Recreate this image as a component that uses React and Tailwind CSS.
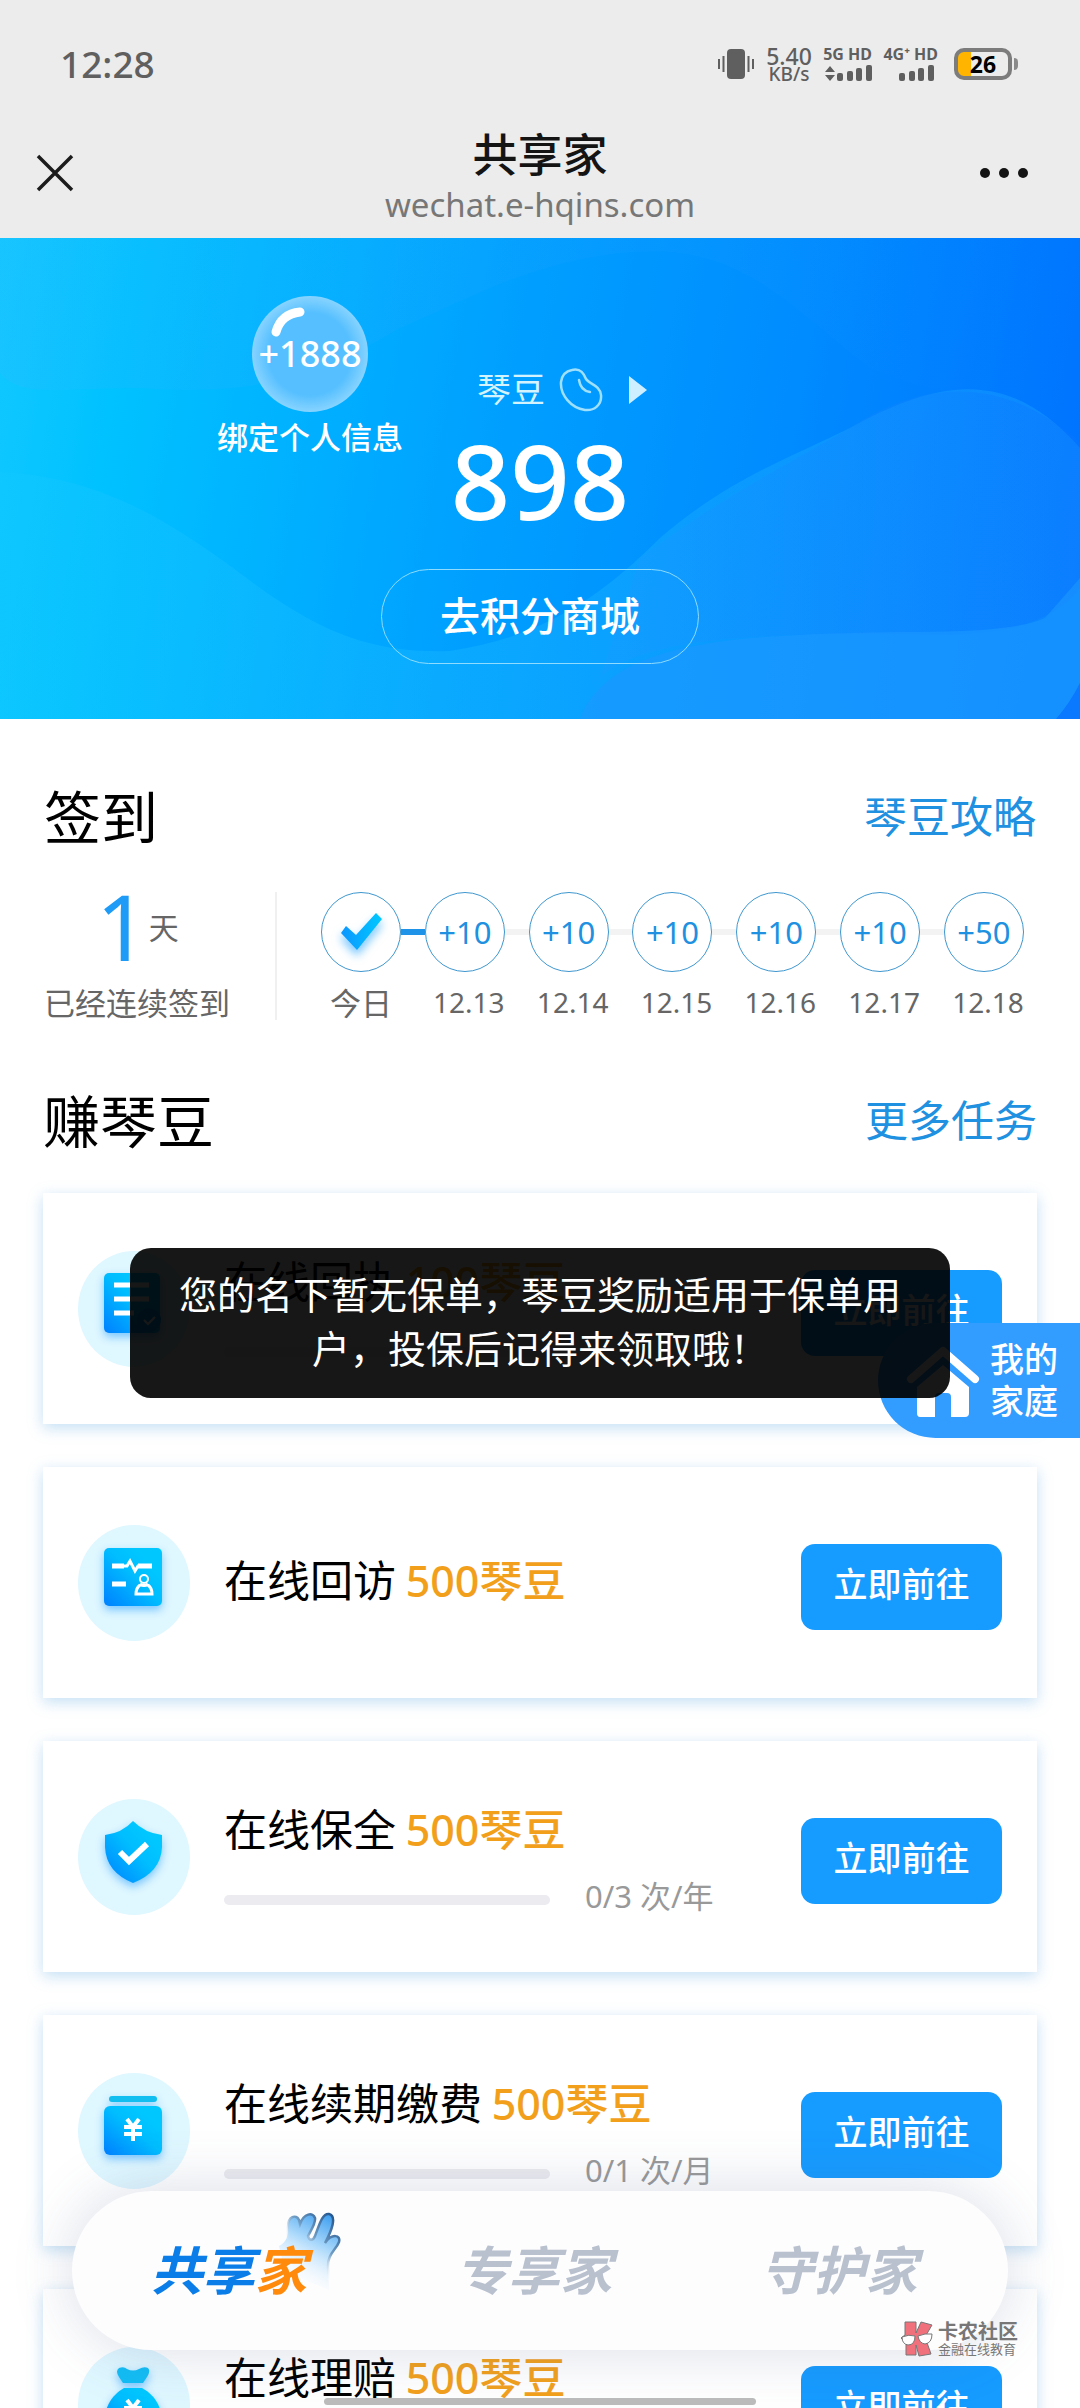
import React from "react";

const days = [
  { label: "今日", done: true },
  { label: "12.13", points: "+10" },
  { label: "12.14", points: "+10" },
  { label: "12.15", points: "+10" },
  { label: "12.16", points: "+10" },
  { label: "12.17", points: "+10" },
  { label: "12.18", points: "+50" },
];

const tasks = [
  { title: "在线回执", reward: "100琴豆", icon: "receipt", count: " " },
  { title: "在线回访", reward: "500琴豆", icon: "visit" },
  { title: "在线保全", reward: "500琴豆", icon: "shield", count: "0/3 次/年" },
  { title: "在线续期缴费", reward: "500琴豆", icon: "renew", count: "0/1 次/月" },
  { title: "在线理赔", reward: "500琴豆", icon: "claim", count: " " },
];

function Yen({ x, y }) {
  return (
    <g transform={`translate(${x} ${y})`} stroke="#fff" strokeWidth="4" fill="none">
      <path d="M-6-11 0-3 6-11M0-4V11M-9-3H9M-9 4H9" />
    </g>
  );
}

function TaskIcon({ kind }) {
  return (
    <svg viewBox="0 0 112 116" className="h-[116px] w-[112px] shrink-0" aria-hidden="true">
      <defs>
        <linearGradient id={"fill-" + kind} x1="0" y1="1" x2="0.8" y2="0.2">
          <stop offset="0" stopColor="#0080ff" />
          <stop offset="0.65" stopColor="#00bdff" />
          <stop offset="1" stopColor="#00c8ff" />
        </linearGradient>
      </defs>
      <ellipse cx="56" cy="58" rx="56" ry="58" fill="#dff7ff" />
      <g className="drop-shadow-[0_4px_4px_rgba(0,140,255,0.45)]">
        {kind === "receipt" && (
          <>
            <rect x="26" y="22" width="56" height="60" rx="5" fill="url(#fill-receipt)" />
            <path d="M36 34H71M36 48H71M36 62H56" stroke="#fff" strokeWidth="5" />
            <circle cx="71" cy="69" r="12" fill="#00a2ff" />
            <path d="M66 69l4 4 7-7" stroke="#fff" strokeWidth="2" fill="none" />
          </>
        )}
        {kind === "visit" && (
          <>
            <rect x="26" y="23" width="58" height="58" rx="5" fill="url(#fill-visit)" />
            <path d="M34 41H46" stroke="#fff" strokeWidth="5" />
            <path d="M44 41H49L52 36 57 46 60 41H64" stroke="#fff" strokeWidth="3" fill="none" />
            <path d="M60 41H74M34 59H48" stroke="#fff" strokeWidth="5" />
            <circle cx="66" cy="54" r="4" stroke="#fff" strokeWidth="2" fill="none" />
            <path d="M62 59q4 3 8 0M62 60q-4 3-4 9H74q0-6-4-9M59 69H73" stroke="#fff" strokeWidth="3" fill="none" />
          </>
        )}
        {kind === "shield" && (
          <>
            <path d="M55 22Q67 34 84 36V48Q83 73 55 84 28 73 27 48V36Q44 34 55 22Z" fill="url(#fill-shield)" />
            <path d="M42 53l9 9 18-17" stroke="#fff" strokeWidth="6" fill="none" />
          </>
        )}
        {kind === "renew" && (
          <>
            <rect x="31" y="23" width="48" height="6" rx="3" fill="#12bdf0" />
            <rect x="26" y="33" width="58" height="49" rx="6" fill="url(#fill-renew)" />
            <Yen x={55} y={57} />
          </>
        )}
        {kind === "claim" && (
          <>
            <path d="M41 21q5-2 8 1 6 3 12 0 5-3 9-1 3 3-1 9l-4 6H45l-4-6q-4-6 0-9Z" fill="#12bdf5" />
            <path d="M46 41H64Q84 52 84 76 83 88 70 88H40Q27 88 26 76 27 52 46 41Z" fill="url(#fill-claim)" />
            <Yen x={55} y={64} />
          </>
        )}
      </g>
    </svg>
  );
}

function StatusBar() {
  return (
    <div className="flex h-32 items-center justify-between pr-[62px] pl-15 text-[#5f5f5f]">
      <time className="font-['Noto_Sans','Noto_Sans_CJK_SC',sans-serif] text-[37px] leading-10 font-medium">12:28</time>
      <div className="flex items-center font-['Noto_Sans','Noto_Sans_CJK_SC',sans-serif]">
        <svg viewBox="0 0 36 32" className="h-8 w-9" aria-hidden="true">
          <rect x="9" y="1" width="18" height="30" rx="4" fill="#5f5f5f" />
          <path d="M1 11v10M5.500 8v16M30.500 8v16M35 11v10" stroke="#5f5f5f" strokeWidth="2" />
        </svg>
        <div className="ml-2.5 w-[50px] text-center font-medium">
          <div className="text-[23px] leading-5">5.40</div>
          <div className="text-[19px] leading-4">KB/s</div>
        </div>
        <div className="ml-2.5 flex w-12 flex-col items-end gap-1">
          <span className="text-[16px] leading-3 font-bold whitespace-nowrap">5G HD</span>
          <svg viewBox="0 0 48 17" className="h-[17px] w-12" aria-hidden="true" fill="#5f5f5f">
            <path d="M6 2l5 6H1zM6 17l5-6H1z" />
            <rect x="13" y="9" width="6" height="8" rx="2" />
            <rect x="23" y="7" width="6" height="10" rx="2" />
            <rect x="32" y="4" width="6" height="13" rx="2" />
            <rect x="42" y="1" width="6" height="16" rx="2" />
          </svg>
        </div>
        <div className="ml-2.5 flex w-14 flex-col items-end gap-1">
          <span className="text-[16px] leading-3 font-bold whitespace-nowrap">4G⁺ HD</span>
          <svg viewBox="0 0 38 17" className="mr-1 h-[17px] w-[38px]" aria-hidden="true" fill="#5f5f5f">
            <rect x="3" y="9" width="6" height="8" rx="2" />
            <rect x="13" y="7" width="6" height="10" rx="2" />
            <rect x="22" y="4" width="6" height="13" rx="2" />
            <rect x="32" y="1" width="6" height="16" rx="2" />
          </svg>
        </div>
        <div className="ml-4 flex items-center">
          <div className="flex h-8 w-[58px] items-center justify-center rounded-[10px] border-4 border-[#7c7c7c] bg-[linear-gradient(90deg,#ffb400_13px,#ececec_13px)] text-[23px] leading-6 font-bold text-black">
            26
          </div>
          <div className="ml-0.5 h-3 w-1 rounded-r-full bg-[#8a8a8a]" />
        </div>
      </div>
    </div>
  );
}

function TitleBar() {
  return (
    <div className="flex h-[110px] justify-between px-9">
      <button aria-label="关闭" className="flex h-[90px] w-24 items-center">
        <svg viewBox="0 0 38 38" className="size-[38px]" aria-hidden="true">
          <path d="M2 2 36 36M36 2 2 36" stroke="#1c1c1c" strokeWidth="3.500" />
        </svg>
      </button>
      <div className="text-center">
        <h1 className="text-[45px] leading-[50px] font-medium text-[#141414]">共享家</h1>
        <p className="font-['Noto_Sans','Noto_Sans_CJK_SC',sans-serif] text-[33px] leading-[54px] text-[#777]">
          wechat.e-hqins.com
        </p>
      </div>
      <button aria-label="更多" className="flex h-[90px] w-24 items-center justify-end gap-[9px] pr-4">
        <span className="size-2.5 rounded-full bg-[#141414]" />
        <span className="size-2.5 rounded-full bg-[#141414]" />
        <span className="size-2.5 rounded-full bg-[#141414]" />
      </button>
    </div>
  );
}

function Banner() {
  return (
    <section className="relative flex flex-col items-center bg-[linear-gradient(100deg,#12c8ff_0%,#00c2ff_12%,#00a0ff_45%,#008cff_70%,#0070ff_100%)] pt-[130px] pb-[55px] text-white">
      <svg viewBox="0 0 1080 481" preserveAspectRatio="none" className="absolute inset-0 size-full" aria-hidden="true">
        <defs>
          <linearGradient id="wave-top" x1="0" y1="0" x2="1" y2="0">
            <stop offset="0" stopColor="#30b8ff" />
            <stop offset="0.7" stopColor="#1a98ff" stopOpacity="0.7" />
            <stop offset="1" stopColor="#0070ff" stopOpacity="0" />
          </linearGradient>
          <linearGradient id="wave-right" x1="0" y1="0" x2="1" y2="0">
            <stop offset="0" stopColor="#199cff" />
            <stop offset="1" stopColor="#0a74ff" />
          </linearGradient>
          <linearGradient id="wave-left" x1="0" y1="0" x2="1" y2="0">
            <stop offset="0" stopColor="#12c8ff" />
            <stop offset="1" stopColor="#1698ff" />
          </linearGradient>
        </defs>
        <path d="M0 0H1080V160Q960 170 870 130C790 70 740 0 620 15 530 25 470 60 400 90 330 130 270 160 140 150 60 150 20 160 0 135Z" fill="url(#wave-top)" opacity=".22" />
        <path d="M0 234C110 240 180 290 260 350 330 400 380 415 450 413 540 400 600 360 660 300 730 240 790 220 850 190 940 140 1010 130 1080 210V481H0Z" fill="url(#wave-left)" opacity=".5" />
        <path d="M640 320C720 260 790 225 850 190 940 130 1020 150 1080 205V350C1050 390 990 400 900 396 760 395 640 400 600 440Z" fill="url(#wave-right)" opacity=".4" />
        <path d="M580 481C600 430 660 405 780 398 900 390 1000 400 1045 380L1080 340V481Z" fill="#1c98ff" opacity=".6" />
        <path d="M1056 481Q1070 465 1080 445V481Z" fill="#0a78ff" />
      </svg>

      <button className="absolute top-[58px] left-[217px] flex flex-col items-center">
        <span className="relative flex size-[116px] items-center justify-center rounded-full bg-[radial-gradient(circle_at_50%_50%,#55bfff_50%,#8ad5ff_72%)] font-['Noto_Sans','Noto_Sans_CJK_SC',sans-serif] text-[36px] leading-10 font-medium">
          <svg viewBox="0 0 116 116" className="absolute inset-0 size-full" aria-hidden="true">
            <path d="M24 36Q29 18 48 16" stroke="#fff" strokeWidth="9" strokeLinecap="round" fill="none" />
          </svg>
          <span className="relative">+1888</span>
        </span>
        <span className="mt-1 text-[31px] leading-10 font-medium">绑定个人信息</span>
      </button>

      <button className="relative flex h-11 items-center pl-11 text-[34px] leading-11 text-[#d3f3ff]">
        <span className="pb-1">琴豆</span>
        <svg viewBox="0 0 44 44" className="ml-3.5 size-11" fill="none" stroke="#9fe0ff" strokeWidth="2.500" strokeLinecap="round" aria-hidden="true">
          <path d="M13 2C22 0 25 6 27 11 30 16 41 17 42 27 43 37 35 43 26 42 12 40 1 27 2 14 3 7 7 3 13 2Z" />
          <path d="M20 12C21 19 24 23 31 24" />
        </svg>
        <svg viewBox="0 0 18 28" className="ml-[26px] h-7 w-[18px]" fill="#cdefff" aria-hidden="true">
          <path d="M0 0 18 14 0 28Z" />
        </svg>
      </button>
      <strong className="relative mt-4 font-['Noto_Sans','Noto_Sans_CJK_SC',sans-serif] text-[104px] leading-[104px] font-medium">898</strong>
      <button className="relative mt-[37px] h-[95px] w-[318px] rounded-full border border-[#8fdcff] pb-1.5 text-[40px] leading-[60px] font-medium">
        去积分商城
      </button>
    </section>
  );
}

function SectionHead({ title, link }) {
  return (
    <div className="flex items-center justify-between">
      <h2 className="text-[57px] leading-[68px] text-black">{title}</h2>
      <a href="#" className="text-[43px] leading-[68px] text-[#2090e0]">{link}</a>
    </div>
  );
}

function CheckIn() {
  return (
    <section className="px-11 pt-[61px]">
      <SectionHead title="签到" link="琴豆攻略" />
      <div className="mt-11 flex pr-3">
        <div className="flex h-32 w-[233px] shrink-0 flex-col border-r-2 border-[#f0f0f0] text-[#666]">
          <div className="flex h-[68px] items-center pl-[52px]">
            <span className="font-['Noto_Sans','Noto_Sans_CJK_SC',sans-serif] text-[92px] leading-[68px] text-[#1d9bf7]">1</span>
            <span className="text-[30px] leading-10">天</span>
          </div>
          <p className="mt-[22px] text-[31px] leading-10 whitespace-nowrap">已经连续签到</p>
        </div>
        <ol className="ml-11 flex flex-1">
          {days.map((day) => (
            <li key={day.label} className="flex flex-1 flex-col last:flex-none">
              <div className="flex items-center">
                <span className="flex size-20 shrink-0 items-center justify-center rounded-full border border-[#3f97cf] font-['Noto_Sans','Noto_Sans_CJK_SC',sans-serif] text-[31px] leading-10 text-[#2090e0]">
                  {day.done ? (
                    <svg viewBox="0 0 44 42" className="h-[42px] w-11 drop-shadow-[0_6px_5px_rgba(0,150,255,0.55)]" aria-label="已签到">
                      <defs>
                        <linearGradient id="tick" x1="0" y1="0" x2="1" y2="0">
                          <stop offset="0" stopColor="#0c96ff" />
                          <stop offset="1" stopColor="#00c8ff" />
                        </linearGradient>
                      </defs>
                      <path d="M2 22 7 15 17 24 37 2 43 8 18 39Z" fill="url(#tick)" />
                    </svg>
                  ) : (
                    day.points
                  )}
                </span>
                {day.label !== "12.18" && (
                  <span className={day.done ? "h-1.5 flex-1 bg-[#1f93e8]" : "h-1.5 flex-1 bg-[#f3f3f3]"} />
                )}
              </div>
              <span className={day.done ? "mt-2.5 w-20 text-center text-[31px] leading-10 text-[#666]" : "mt-2.5 w-20 pl-2 text-center font-['Noto_Sans','Noto_Sans_CJK_SC',sans-serif] text-[28px] leading-10 text-[#666]"}>
                {day.label}
              </span>
            </li>
          ))}
        </ol>
      </div>
    </section>
  );
}

function TaskCard({ task }) {
  return (
    <li className="flex h-[231px] shrink-0 items-center bg-white px-[35px] shadow-[0_4px_14px_rgba(90,165,225,0.36)]">
      <TaskIcon kind={task.icon} />
      <div className={task.count ? "ml-[34px] flex min-w-0 flex-1 flex-col pt-1" : "ml-[34px] flex min-w-0 flex-1 flex-col pb-1.5"}>
        <h3 className="text-[43px] leading-[60px] whitespace-nowrap text-black">
          {task.title}{" "}
          <span className="font-['Noto_Sans','Noto_Sans_CJK_SC',sans-serif] font-medium text-[#f2a01c]">{task.reward}</span>
        </h3>
        {task.count && (
          <div className="mt-3 flex h-12 items-center">
            <div role="progressbar" aria-label={task.title} aria-valuenow={0} className="mt-2 h-2.5 w-[326px] rounded-full bg-[#ebebf0]" />
            <span className="ml-[35px] font-['Noto_Sans','Noto_Sans_CJK_SC',sans-serif] text-[31px] leading-11 whitespace-pre text-[#999]">{task.count}</span>
          </div>
        )}
      </div>
      <button className="mt-2 h-[86px] w-[201px] shrink-0 rounded-[14px] bg-[#169bff] pb-2 text-[34px] leading-12 font-medium text-white">
        立即前往
      </button>
    </li>
  );
}

function FamilyButton() {
  return (
    <button className="absolute top-[1323px] right-0 flex h-[115px] w-[202px] items-center rounded-l-full bg-[#339cff] pl-7 text-white">
      <svg viewBox="0 0 74 76" className="h-[76px] w-[74px]" aria-hidden="true">
        <path d="M5 36 37 8 69 36" stroke="#fff" strokeWidth="8" strokeLinecap="round" strokeLinejoin="round" fill="none" />
        <path d="M11 44 37 22 63 44V70Q63 74 59 74H45V54Q45 50 41 50H33Q29 50 29 54V74H14Q11 74 11 70Z" fill="#fff" />
      </svg>
      <span className="ml-2.5 w-[68px] pb-1 text-[34px] leading-[42px] font-medium">我的家庭</span>
    </button>
  );
}

function Toast() {
  return (
    <div role="status" className="absolute inset-x-[130px] top-[1248px] rounded-[21px] bg-black/91 px-12 pt-[18px] pb-6 text-center text-[38px] leading-[54px] text-white">
      您的名下暂无保单，琴豆奖励适用于保单用户，投保后记得来领取哦！
    </div>
  );
}

function BottomNav() {
  return (
    <nav className="absolute inset-x-[72px] bottom-[58px] flex h-[159px] items-center rounded-full bg-[#fdfdfe] pr-4 pb-1.5 pl-1 text-[52px] leading-[72px] font-bold text-[#b9c1cf] italic shadow-[0_0_60px_rgba(80,100,140,0.22)]">
      <a href="#" aria-current="page" className="relative flex-1 text-center text-[#0b7de8]">
        <svg viewBox="0 0 64 80" className="absolute -top-5 right-[38px] h-20 w-16" aria-hidden="true">
          <defs>
            <linearGradient id="hand" x1="0.8" y1="0" x2="0.4" y2="1">
              <stop offset="0" stopColor="#3f9ff0" />
              <stop offset="0.4" stopColor="#a9d8fb" />
              <stop offset="1" stopColor="#fff" stopOpacity="0" />
            </linearGradient>
            <linearGradient id="hand-line" x1="1" y1="0" x2="0.5" y2="0.65">
              <stop offset="0" stopColor="#174a86" />
              <stop offset="0.6" stopColor="#6f9cc4" />
              <stop offset="1" stopColor="#fff" stopOpacity="0" />
            </linearGradient>
          </defs>
          <path
            d="M0 34C8 30 9 24 9 15 9 4 17 2 20 8L21 12C25 1 34 0 36 6 37 11 32 18 29 24 30 29 34 29 36 24 40 14 43 1 50 2 58 4 53 18 46 31 53 21 62 23 60 30 57 38 48 42 49 56L50 78 6 60Z"
            fill="url(#hand)"
            stroke="url(#hand-line)"
            strokeWidth="2.500"
          />
        </svg>
        <span className="relative">
          共享<span className="text-[#ff8a0c]">家</span>
        </span>
      </a>
      <a href="#" className="flex-1 text-center">专享家</a>
      <a href="#" className="flex-1 text-center">守护家</a>
    </nav>
  );
}

function Watermark() {
  return (
    <div className="absolute right-[62px] bottom-[51px] flex items-center gap-1 text-[#777]">
      <svg viewBox="0 0 34 36" className="h-9 w-[34px]" aria-hidden="true">
        <path d="M5 1H16V12L21 1 32 4 25 16 31 33 19 35 16 24V34H6V22L1 17 5 14Z" fill="#f0707c" stroke="#777" strokeWidth="1" />
        <path d="M2 16Q9 13 15 15 15 24 8 24 2 23 2 16ZM18 15Q25 12 32 13 32 22 25 23 19 22 18 15Z" fill="#fff" stroke="#777" strokeWidth="1" />
      </svg>
      <div className="flex flex-col">
        <span className="text-[20px] leading-5 font-bold">卡农社区</span>
        <span className="text-[13px] leading-4">金融在线教育</span>
      </div>
    </div>
  );
}

export default function App() {
  return (
    <div className="relative flex h-screen flex-col overflow-hidden bg-white font-['Noto_Sans_CJK_SC',sans-serif]">
      <header className="shrink-0 bg-[#ececec]">
        <StatusBar />
        <TitleBar />
      </header>
      <main>
        <Banner />
        <CheckIn />
        <section className="px-[43px] pt-[62px]">
          <SectionHead title="赚琴豆" link="更多任务" />
          <ul className="mt-[41px] flex flex-col gap-[43px]">
            {tasks.map((task) => (
              <TaskCard key={task.title} task={task} />
            ))}
          </ul>
        </section>
      </main>
      <FamilyButton />
      <Toast />
      <BottomNav />
      <Watermark />
      <div className="absolute bottom-[3px] left-1/2 h-[7px] w-[432px] -translate-x-1/2 rounded-full bg-[#bbb]" />
    </div>
  );
}
